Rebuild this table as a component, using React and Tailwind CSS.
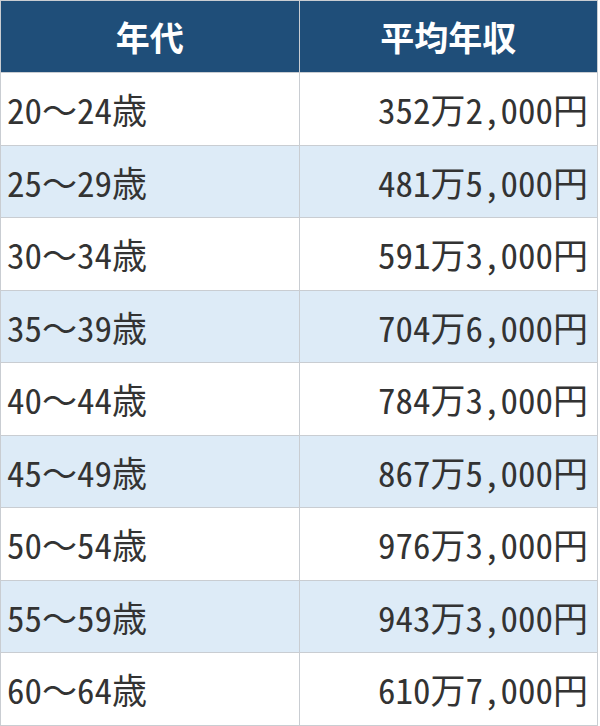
const rows = [
  ['20～24歳', '352万2,000円'],
  ['25～29歳', '481万5,000円'],
  ['30～34歳', '591万3,000円'],
  ['35～39歳', '704万6,000円'],
  ['40～44歳', '784万3,000円'],
  ['45～49歳', '867万5,000円'],
  ['50～54歳', '976万3,000円'],
  ['55～59歳', '943万3,000円'],
  ['60～64歳', '610万7,000円'],
];

export default function App() {
  return (
    <div className="h-[726px] w-[600px] bg-white">
      <table
        className="w-[598px] table-fixed border-collapse"
        style={{ fontFamily: '"Noto Sans Mono CJK JP", "Noto Sans CJK JP", sans-serif' }}
      >
        <thead>
          <tr className="h-[72px] bg-[#1f4e79] text-white">
            <th className="w-1/2 border border-[#c9cdd2] text-center text-[34px] font-bold">年代</th>
            <th className="w-1/2 border border-[#c9cdd2] text-center text-[34px] font-bold">平均年収</th>
          </tr>
        </thead>
        <tbody>
          {rows.map(([age, pay], i) => (
            <tr key={age} className={`h-[72.5px] ${i % 2 === 1 ? 'bg-[#ddebf7]' : 'bg-white'} text-[#333333]`}>
              <td className="border border-[#c9cdd2] pl-[6px] pr-2 text-left text-[35px] leading-none">{age}</td>
              <td className="border border-[#c9cdd2] pl-2 pr-[9px] text-right text-[35px] leading-none">{pay}</td>
            </tr>
          ))}
        </tbody>
      </table>
    </div>
  );
}
